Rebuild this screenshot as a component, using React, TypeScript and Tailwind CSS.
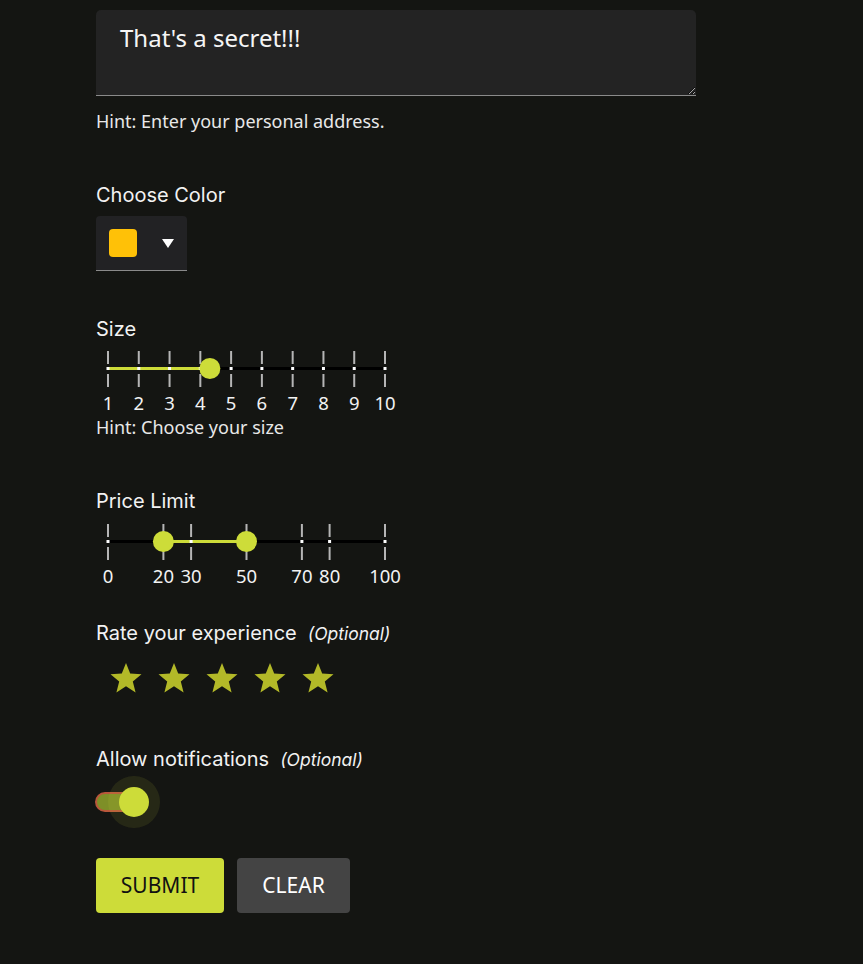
import { useState } from "react";

const LIME = "#cddc39";
const TRACK = 277;
const PAD = 11;

type SliderProps = {
  ticks: number[];
  min: number;
  max: number;
  values: number[];
};

function TickSlider({ ticks, min, max, values }: SliderProps) {
  const x = (v: number) => PAD + ((v - min) / (max - min)) * TRACK;
  const lo = values.length > 1 ? x(values[0]) : PAD;
  const hi = x(values[values.length - 1]);

  return (
    <div className="ml-[1px] w-[299px]">
      <svg width={TRACK + PAD * 2} height="36" className="block">
        <rect x={PAD} y="16" width={TRACK} height="3" fill="#000" />
        <rect x={lo} y="16" width={hi - lo} height="3" fill={LIME} />
        {ticks.map((t) => (
          <g key={t}>
            <rect x={x(t) - 1} y="0" width="2" height="13" fill="#b5b5b5" />
            <rect x={x(t) - 1} y="23" width="2" height="13" fill="#b5b5b5" />
            <rect x={x(t) - 1.5} y="16" width="3" height="3" fill="#fff" />
          </g>
        ))}
        {values.map((v) => (
          <circle key={v} cx={x(v)} cy="17.5" r="10.5" fill={LIME} />
        ))}
      </svg>
      <div className="mt-[5px] flex px-[11px] font-['Noto_Sans',sans-serif] text-[18.5px] leading-[22px] text-[#f2f2f2]">
        {ticks.map((t, i) => (
          <div key={t} className="contents">
            {i > 0 && <div style={{ flexGrow: t - ticks[i - 1] }} />}
            <div className="flex w-0 justify-center whitespace-nowrap">{t}</div>
          </div>
        ))}
      </div>
    </div>
  );
}

function Star() {
  return (
    <svg width="32" height="32" viewBox="0 0 32 32">
      <polygon
        points="16,1 20.2,11.6 31.5,12.2 22.8,19.4 25.6,30.5 16,24.3 6.4,30.5 9.2,19.4 0.5,12.2 11.8,11.6"
        fill="#b3b928"
      />
    </svg>
  );
}

function Label({ text, optional }: { text: string; optional?: boolean }) {
  return (
    <p className="flex items-baseline text-[20px] leading-[24px]">
      {text}
      {optional ? (
        <span className="ml-[11px] text-[17.5px] italic">(Optional)</span>
      ) : null}
    </p>
  );
}

export default function App() {
  const [notify, setNotify] = useState(true);

  return (
    <div className="flex min-h-[964px] flex-col items-start bg-[#141512] pl-[96px] pt-[10px] font-['Inter',sans-serif] text-[#f2f2f2]">
      <textarea
        readOnly
        value="That's a secret!!!"
        className="block h-[86px] w-[600px] rounded-t-[5px] border-b border-[#8a8a8a] bg-[#232323] px-[24px] pt-[12px] font-['Noto_Sans',sans-serif] text-[24px] leading-[32px] text-[#f5f5f5] outline-none"
      />
      <p className="mt-[15px] font-['Noto_Sans',sans-serif] text-[18px] leading-[20px] text-[#e8e8e8]">
        Hint: Enter your personal address.
      </p>

      <div className="mt-[52px]">
        <Label text="Choose Color" />
      </div>
      <div className="mt-[9px] flex h-[55px] w-[91px] items-center rounded-t-[4px] border-b border-[#8a8a8a] bg-[#222224] pl-[13px]">
        <div className="h-[28px] w-[28px] rounded-[4px] bg-[#ffc107]" />
        <svg className="ml-[25px]" width="12" height="10" viewBox="0 0 12 10">
          <polygon points="0,1 12,1 6,10" fill="#ffffff" />
        </svg>
      </div>

      <div className="mt-[46px]">
        <Label text="Size" />
      </div>
      <div className="mt-[10px]">
        <TickSlider ticks={[1, 2, 3, 4, 5, 6, 7, 8, 9, 10]} min={1} max={10} values={[4.31]} />
      </div>
      <p className="mt-[3px] font-['Noto_Sans',sans-serif] text-[18px] leading-[20px] text-[#e8e8e8]">
        Hint: Choose your size
      </p>

      <div className="mt-[52px]">
        <Label text="Price Limit" />
      </div>
      <div className="mt-[11px]">
        <TickSlider ticks={[0, 20, 30, 50, 70, 80, 100]} min={0} max={100} values={[20, 50]} />
      </div>

      <div className="mt-[34px]">
        <Label text="Rate your experience" optional />
      </div>
      <div className="mt-[16px] flex gap-[16px] pl-[14px]">
        {[1, 2, 3, 4, 5].map((n) => (
          <Star key={n} />
        ))}
      </div>

      <div className="mt-[53px]">
        <Label text="Allow notifications" optional />
      </div>
      <button
        type="button"
        onClick={() => setNotify(!notify)}
        className="relative mt-[4px] block h-[52px] w-[70px]"
      >
        <span className="absolute left-[-1px] top-[16px] h-[20px] w-[44px] rounded-full border-2 border-[#b9573b] bg-[#7e8f27]" />
        <span className="absolute left-[12px] top-0 h-[52px] w-[52px] rounded-full bg-[#cddc39]/10" />
        <span className="absolute left-[23px] top-[11px] h-[30px] w-[30px] rounded-full bg-[#cddc39]" />
      </button>

      <div className="mt-[30px] flex gap-[13px] font-['Noto_Sans',sans-serif] text-[21px]">
        <button
          type="button"
          className="h-[55px] w-[128px] rounded-[4px] text-[#111]"
          style={{ backgroundColor: LIME }}
        >
          SUBMIT
        </button>
        <button type="button" className="h-[55px] w-[113px] rounded-[4px] bg-[#444444] text-white">
          CLEAR
        </button>
      </div>
    </div>
  );
}
